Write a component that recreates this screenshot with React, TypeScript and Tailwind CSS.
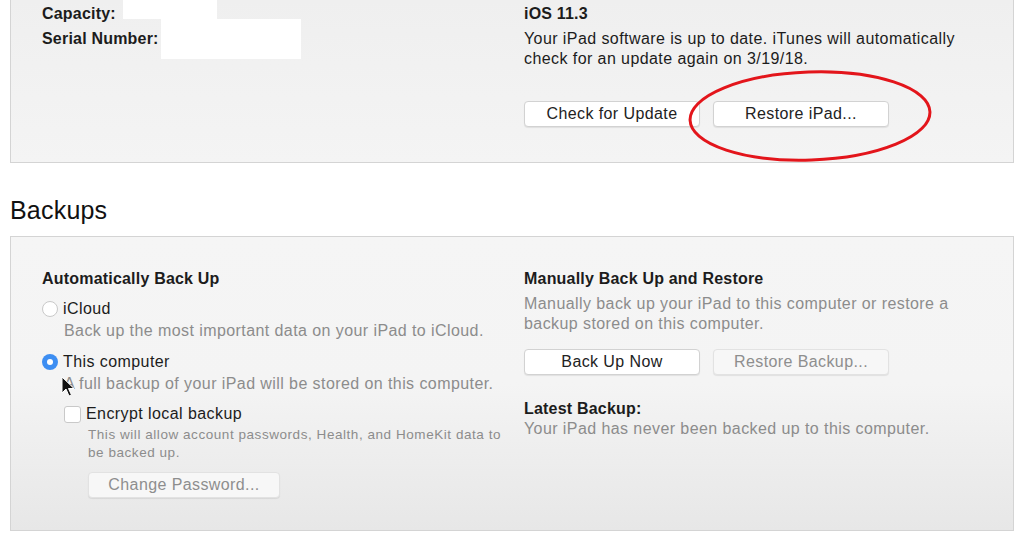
import React from 'react';

const font = { fontFamily: '"Liberation Sans", Arial, sans-serif' };

const Button = ({ label, disabled, className = '' }: { label: string; disabled?: boolean; className?: string }) => (
  <button
    className={`h-[26px] w-[176px] rounded-[4px] border text-[16px] leading-none tracking-[0.4px] shadow-[0_1px_1px_rgba(0,0,0,0.08)] ${
      disabled ? 'border-[#e2e2e2] bg-[#f7f7f7] text-[#8e8e8e]' : 'border-[#d2d2d2] bg-white text-[#222]'
    } ${className}`}
  >
    {label}
  </button>
);

const Radio = ({ checked }: { checked?: boolean }) =>
  checked ? (
    <span className="flex h-[16px] w-[16px] shrink-0 items-center justify-center rounded-full bg-[#3d8ef2]">
      <span className="h-[6px] w-[6px] rounded-full bg-white" />
    </span>
  ) : (
    <span className="h-[16px] w-[16px] shrink-0 rounded-full border border-[#c9c9c9] bg-white" />
  );

const Cursor = () => (
  <svg className="absolute left-[61px] top-[376px]" width="14" height="22" viewBox="0 0 14 22">
    <path d="M1 1 L1 17 L5 13 L8 20 L10.5 19 L7.5 12.5 L13 12.5 Z" fill="#111" stroke="#fff" strokeWidth="1" />
  </svg>
);

export default function App() {
  return (
    <div className="relative h-[539px] w-[1024px] overflow-hidden bg-white text-[#1c1c1c] tracking-[0.42px]" style={font}>
      {/* Software panel (top edge cut off) */}
      <div className="ml-[10px] grid h-[163px] w-[1004px] grid-cols-[482px_1fr] border-x border-b border-[#d4d4d4] bg-gradient-to-b from-[#efefef] to-[#f4f4f4] pl-[31px]">
        <div className="relative pt-[4px] text-[16px] font-bold leading-[20px] tracking-[0.2px]">
          <div>Capacity:</div>
          <div className="mt-[5px]">Serial Number:</div>
          <span className="absolute left-[81px] top-0 h-[19px] w-[94px] bg-white" />
          <span className="absolute left-[119px] top-[19px] h-[40px] w-[140px] bg-white" />
        </div>
        <div className="pt-[4px]">
          <div className="text-[16px] font-bold leading-[20px] tracking-[0.2px]">iOS 11.3</div>
          <p className="mt-[5px] w-[460px] text-[16px] leading-[20px]">
            Your iPad software is up to date. iTunes will automatically check for an update again on 3/19/18.
          </p>
          <div className="mt-[32px] flex gap-[13px]">
            <Button label="Check for Update" />
            <Button label="Restore iPad..." />
          </div>
        </div>
      </div>

      <h2 className="ml-[10px] mt-[32px] text-[25px] leading-[30px] tracking-[0.2px] text-[#111]">Backups</h2>

      {/* Backups panel */}
      <div className="ml-[10px] mt-[11px] grid h-[295px] w-[1004px] grid-cols-[482px_1fr] border border-[#d4d4d4] bg-gradient-to-b from-[#f5f5f5] via-[#f4f4f4] to-[#e7e7e7] pl-[31px] pt-[32px]">
        <div>
          <div className="text-[16px] font-bold leading-[20px] tracking-[0.2px]">Automatically Back Up</div>
          <div className="mt-[10px] flex items-center gap-[5px] text-[16px] leading-[20px]">
            <Radio />
            <span>iCloud</span>
          </div>
          <div className="ml-[22px] mt-[2px] text-[16px] leading-[20px] text-[#8c8c8c]">
            Back up the most important data on your iPad to iCloud.
          </div>
          <div className="mt-[11px] flex items-center gap-[5px] text-[16px] leading-[20px]">
            <Radio checked />
            <span>This computer</span>
          </div>
          <div className="ml-[22px] mt-[2px] text-[16px] leading-[20px] text-[#8c8c8c]">
            A full backup of your iPad will be stored on this computer.
          </div>
          <div className="ml-[22px] mt-[10px] flex items-center gap-[5px] text-[16px] leading-[20px]">
            <span className="h-[17px] w-[17px] shrink-0 rounded-[3px] border border-[#c9c9c9] bg-white" />
            <span>Encrypt local backup</span>
          </div>
          <p className="ml-[46px] mt-[2px] w-[430px] text-[13.5px] leading-[18px] tracking-[0.55px] text-[#8c8c8c]">
            This will allow account passwords, Health, and HomeKit data to be backed up.
          </p>
          <Button label="Change Password..." disabled className="ml-[46px] mt-[10px] w-[192px]" />
        </div>
        <div>
          <div className="text-[16px] font-bold leading-[20px] tracking-[0.2px]">Manually Back Up and Restore</div>
          <p className="mt-[5px] w-[460px] text-[16px] leading-[20px] text-[#8c8c8c]">
            Manually back up your iPad to this computer or restore a backup stored on this computer.
          </p>
          <div className="mt-[15px] flex gap-[13px]">
            <Button label="Back Up Now" />
            <Button label="Restore Backup..." disabled />
          </div>
          <div className="mt-[24px] text-[16px] font-bold leading-[20px] tracking-[0.2px]">Latest Backup:</div>
          <div className="text-[16px] leading-[20px] text-[#8c8c8c]">Your iPad has never been backed up to this computer.</div>
        </div>
      </div>

      {/* red annotation ellipse */}
      <svg className="absolute left-0 top-0" width="1024" height="200" viewBox="0 0 1024 200">
        <ellipse cx="810" cy="116" rx="120" ry="44" fill="none" stroke="#e3151b" strokeWidth="3" transform="rotate(-2 810 116)" />
      </svg>
      <Cursor />
    </div>
  );
}
